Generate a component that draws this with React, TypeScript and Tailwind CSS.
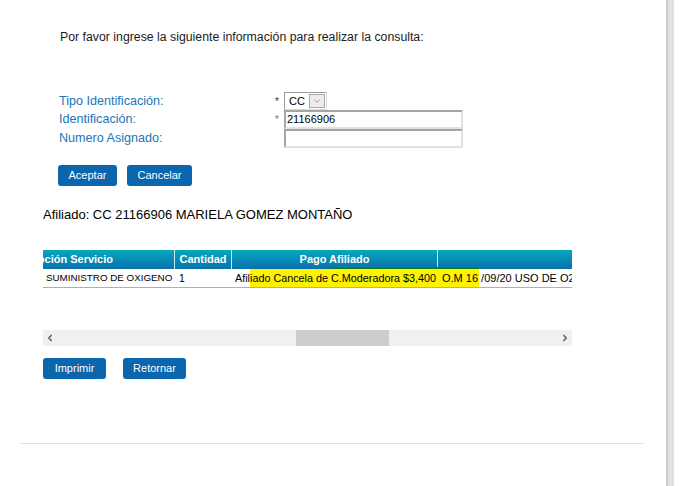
import { ChevronDown, ChevronLeft, ChevronRight } from "lucide-react";

const font = { fontFamily: '"Liberation Sans", Arial, sans-serif' };

function BlueButton({ label, w }: { label: string; w: string }) {
  return (
    <button
      className={`h-[21px] ${w} rounded-[3px] bg-[#0b66ad] text-[11px] text-white leading-[21px]`}
    >
      {label}
    </button>
  );
}

function App() {
  return (
    <div className="flex h-[486px] w-[689px] bg-white text-[#222]" style={font}>
      <div className="relative w-[666px] shrink-0">
        {/* encabezado */}
        <p className="ml-[60px] mt-[30px] text-[12.3px] leading-[14px] text-[#1c1c1c]">
          Por favor ingrese la siguiente información para realizar la consulta:
        </p>

        {/* formulario */}
        <div className="ml-[59px] mt-[48px] flex flex-col text-[12.6px]">
          <div className="flex h-[18px] items-center">
            <span className="w-[216px] text-[#2275b9]">Tipo Identificación:</span>
            <span className="w-[9px] text-[10px] text-[#333]">*</span>
            <div className="flex h-[18px] items-center border border-t-[#9a9a9a] border-l-[#9a9a9a] border-b-[#dcdcdc] border-r-[#dcdcdc] bg-white pl-[4px]">
              <span className="mr-[4px] text-[11px] text-black">CC</span>
              <span className="flex h-[14px] w-[16px] items-center justify-center border border-[#a9a9a9] bg-[#ececec] mr-[1px]">
                <ChevronDown size={10} strokeWidth={1.5} className="text-[#666]" />
              </span>
            </div>
          </div>
          <div className="flex h-[19px] items-center">
            <span className="w-[216px] text-[#2275b9]">Identificación:</span>
            <span className="w-[9px] text-[10px] text-[#b3650a]">*</span>
            <div className="h-[19px] w-[179px] border-2 border-t-[#a5a5a5] border-l-[#a5a5a5] border-b-[#e2e2e2] border-r-[#e2e2e2] pl-[1px] text-[11px] leading-[15px] text-black">
              21166906
            </div>
          </div>
          <div className="flex h-[19px] items-center">
            <span className="w-[225px] text-[#2275b9]">Numero Asignado:</span>
            <div className="h-[19px] w-[179px] border-2 border-t-[#a5a5a5] border-l-[#a5a5a5] border-b-[#e2e2e2] border-r-[#e2e2e2]" />
          </div>
        </div>

        <div className="ml-[58px] mt-[17px] flex gap-[10px]">
          <BlueButton label="Aceptar" w="w-[59px]" />
          <BlueButton label="Cancelar" w="w-[65px]" />
        </div>

        <p className="ml-[43px] mt-[21px] text-[13px] leading-[16px] text-black">
          Afiliado: CC 21166906 MARIELA GOMEZ MONTAÑO
        </p>

        {/* tabla */}
        <div className="ml-[43px] mt-[27px] w-[529px] overflow-hidden">
          <div className="flex h-[19px] bg-gradient-to-b from-[#0aa7bc] to-[#0a70ae] text-[11px] font-bold text-white leading-[19px]">
            <div className="flex w-[131px] justify-end overflow-hidden whitespace-nowrap pr-[61px]">
              Descripción Servicio
            </div>
            <div className="w-[57px] border-l border-white/80 text-center">Cantidad</div>
            <div className="w-[207px] border-l border-white/80 border-r text-center">Pago Afiliado</div>
            <div className="flex-1" />
          </div>
          <div className="relative flex h-[19px] border-b border-[#a7acd3] leading-[18px] text-black whitespace-nowrap">
            <div className="absolute left-[207px] top-0 h-[18px] w-[229px] bg-[#fff200]" />
            <div className="absolute left-[287px] top-[-2px] h-[2px] w-[149px] bg-[#127f1e]" />
            <div className="relative w-[131px] pl-[3px] text-[9.8px]">SUMINISTRO DE OXIGENO</div>
            <div className="relative w-[57px] pl-[5px] text-[10.5px]">1</div>
            <div className="relative w-[209px] pl-[4px] text-[10.8px]">Afiliado Cancela de C.Moderadora $3,400</div>
            <div className="relative flex-1 overflow-hidden pl-[2px] text-[11px]">
              O.M 16 /09/20 USO DE O2 ...
            </div>
          </div>
        </div>

        {/* scroll horizontal */}
        <div className="ml-[43px] mt-[42px] flex h-[16px] w-[529px] items-center bg-[#f0f0f0] text-[#606060]">
          <ChevronLeft size={10} strokeWidth={4} className="ml-[2px]" />
          <div className="ml-[241px] h-[16px] w-[93px] bg-[#cdcdcd]" />
          <div className="flex-1" />
          <ChevronRight size={10} strokeWidth={4} className="mr-[2px]" />
        </div>

        <div className="ml-[43px] mt-[12px] flex gap-[17px]">
          <BlueButton label="Imprimir" w="w-[63px]" />
          <BlueButton label="Retornar" w="w-[63px]" />
        </div>

        <div className="ml-[21px] mt-[64px] h-[1px] w-[622px] bg-[#dbe3e8]" />
      </div>
      <div className="h-full w-[8px] bg-gradient-to-r from-[#c8c8c8] via-[#e6e6e6] to-[#dedede]" />
      <div className="flex-1 bg-white" />
    </div>
  );
}

export default App;
